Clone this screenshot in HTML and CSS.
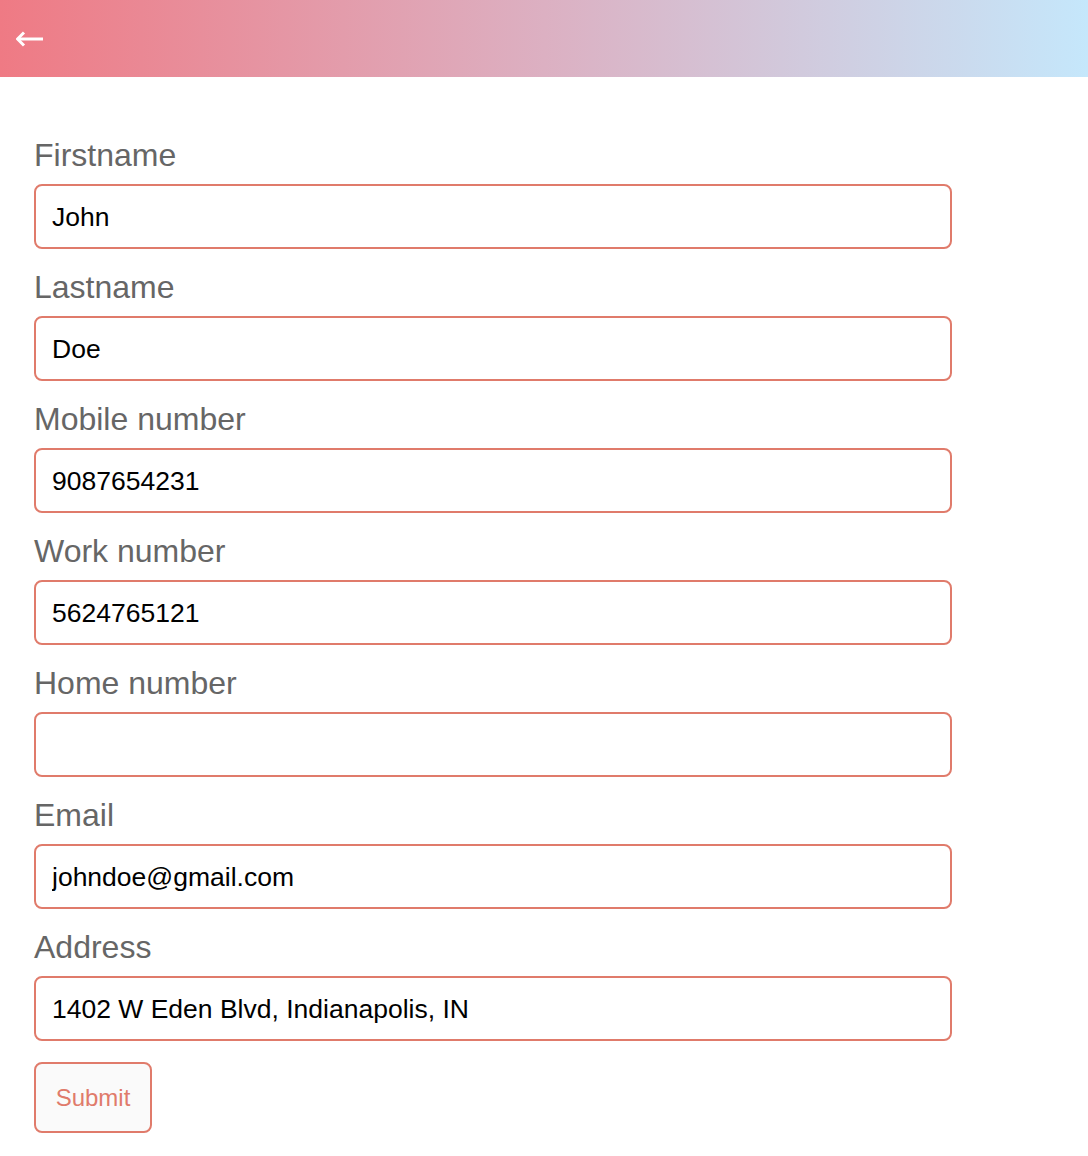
FILE: index.html
```html
<!DOCTYPE html>
<html>
<head>
<meta charset="utf-8">
<link rel="stylesheet" href="styles.css">
</head>
<body>
<header class="topbar">
  <svg class="back" width="28" height="16" viewBox="0 0 28 16">
    <path d="M1.5 8 H27" stroke="#fff" stroke-width="3" fill="none"/>
    <path d="M8 1.5 L1.5 8 L8 14.5" stroke="#fff" stroke-width="3" fill="none" stroke-linejoin="miter"/>
  </svg>
</header>
<form class="form">
  <div class="field"><label class="label">Firstname</label><input class="input" value="John"></div>
  <div class="field"><label class="label">Lastname</label><input class="input" value="Doe"></div>
  <div class="field"><label class="label">Mobile number</label><input class="input" value="9087654231"></div>
  <div class="field"><label class="label">Work number</label><input class="input" value="5624765121"></div>
  <div class="field"><label class="label">Home number</label><input class="input" value=""></div>
  <div class="field"><label class="label">Email</label><input class="input" value="johndoe@gmail.com"></div>
  <div class="field"><label class="label">Address</label><input class="input" value="1402 W Eden Blvd, Indianapolis, IN"></div>
  <button type="button" class="submit">Submit</button>
</form>
</body>
</html>
```
FILE: styles.css
```css
body {
  margin: 0;
  font-family: "Liberation Sans", Arial, sans-serif;
  background: #fff;
}
.topbar {
  height: 77px;
  background: linear-gradient(to right, #ef7a84, #dcb0c2 50%, #c5e7fb);
  display: flex;
  align-items: center;
  padding-left: 16px;
}
.back {
  display: block;
}
.form {
  padding: 60px 0 0 34px;
  width: 918px;
}
.field {
  display: flex;
  flex-direction: column;
  margin-bottom: 20px;
}
.label {
  font-size: 32px;
  line-height: 36px;
  color: #666;
  margin-bottom: 11px;
}
.input {
  box-sizing: border-box;
  height: 65px;
  width: 918px;
  border: 2px solid #e07b6b;
  border-radius: 8px;
  padding: 1px 16px 0;
  font-family: "Liberation Sans", Arial, sans-serif;
  font-size: 26.5px;
  color: #000;
  background: #fff;
  outline: none;
}
.submit {
  box-sizing: border-box;
  margin-top: 1px;
  height: 71px;
  width: 118px;
  border: 2px solid #e07b6b;
  border-radius: 8px;
  background: #fafafa;
  color: #e07b6b;
  font-family: "Liberation Sans", Arial, sans-serif;
  font-size: 24px;
  padding: 0;
}
```
